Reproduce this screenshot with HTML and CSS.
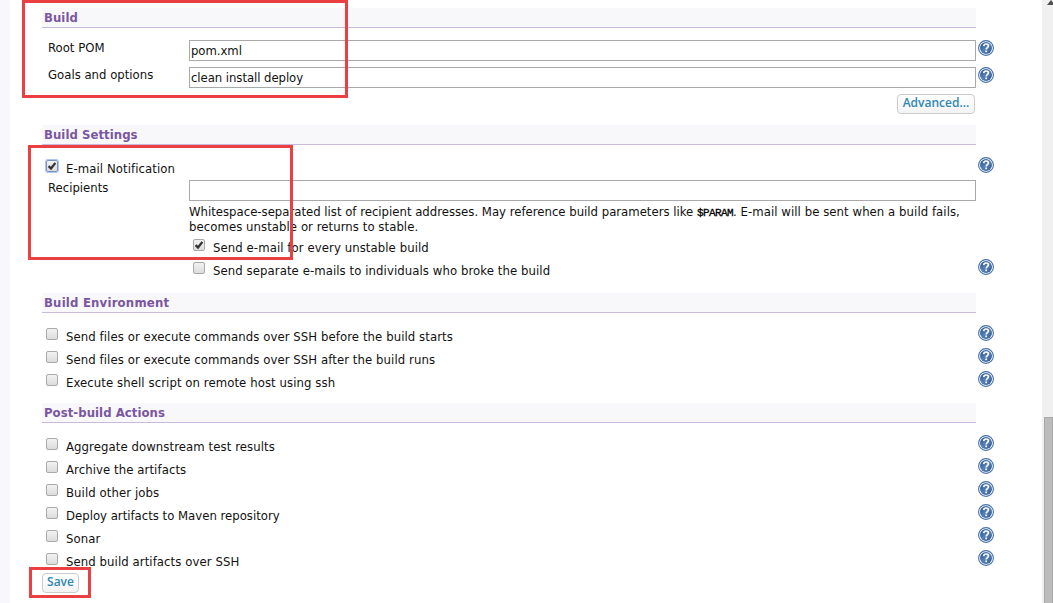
FILE: index.html
```
<!DOCTYPE html>
<html lang="en">
<head>
  <meta charset="UTF-8">
  <title>Job configuration</title>
  <link rel="stylesheet" href="styles.css">
</head>
<body>
  <svg class="defs" width="0" height="0">
    <defs>
      <linearGradient id="blue" x1="0" y1="0" x2="1" y2="1">
        <stop offset="0" stop-color="#24508c"/>
        <stop offset="0.5" stop-color="#5580b6"/>
        <stop offset="1" stop-color="#2d5792"/>
      </linearGradient>
      <symbol id="help" viewBox="0 0 16 16">
        <circle cx="8" cy="8" r="7.4" fill="#fff" stroke="#4470a8" stroke-width="1.1"/>
        <circle cx="8" cy="8" r="6" fill="url(#blue)"/>
        <path d="M5.7 6.1C5.8 4.6 6.8 4 8 4c1.4 0 2.4.8 2.4 2 0 1.500-2.200 1.700-2.200 3.400" fill="none" stroke="#fff" stroke-width="1.7"/>
        <rect x="7.3" y="10.5" width="1.800" height="1.700" fill="#fff"/>
      </symbol>
      <symbol id="tick" viewBox="0 0 12 12">
        <path d="M2.6 6.2L5 8.500L9.4 2.900" fill="none" stroke="#333" stroke-width="2.300"/>
      </symbol>
    </defs>
  </svg>
  <div class="side"></div>
  <main class="config">
    <section class="build">
      <h2>Build</h2>
      <div class="field">
        <label class="name">Root POM</label>
        <div class="input">pom.xml</div>
        <svg class="help"><use href="#help"/></svg>
      </div>
      <div class="field">
        <label class="name">Goals and options</label>
        <div class="input">clean install deploy</div>
        <svg class="help"><use href="#help"/></svg>
      </div>
      <div class="advanced"><button>Advanced...</button></div>
    </section>

    <section class="settings">
      <h2>Build Settings</h2>
      <div class="option">
        <span class="box focus"><svg><use href="#tick"/></svg></span>
        <label>E-mail Notification</label>
        <svg class="help"><use href="#help"/></svg>
      </div>
      <div class="field mail">
        <label class="name">Recipients</label>
        <div class="input"></div>
      </div>
      <p class="description">Whitespace-separated list of recipient addresses. May reference build parameters like <code>$PARAM</code><span class="wide">. E-mail will be sent when a build fails,<br>becomes unstable or returns to stable.</span></p>
      <div class="option nested">
        <span class="box"><svg><use href="#tick"/></svg></span>
        <label>Send e-mail for every unstable build</label>
      </div>
      <div class="option nested">
        <span class="box"></span>
        <label>Send separate e-mails to individuals who broke the build</label>
        <svg class="help"><use href="#help"/></svg>
      </div>
    </section>

    <section class="environment">
      <h2>Build Environment</h2>
      <div class="option">
        <span class="box"></span>
        <label>Send files or execute commands over SSH before the build starts</label>
        <svg class="help"><use href="#help"/></svg>
      </div>
      <div class="option">
        <span class="box"></span>
        <label>Send files or execute commands over SSH after the build runs</label>
        <svg class="help"><use href="#help"/></svg>
      </div>
      <div class="option">
        <span class="box"></span>
        <label>Execute shell script on remote host using ssh</label>
        <svg class="help"><use href="#help"/></svg>
      </div>
    </section>

    <section class="actions">
      <h2>Post-build Actions</h2>
      <div class="option">
        <span class="box"></span>
        <label>Aggregate downstream test results</label>
        <svg class="help"><use href="#help"/></svg>
      </div>
      <div class="option">
        <span class="box"></span>
        <label>Archive the artifacts</label>
        <svg class="help"><use href="#help"/></svg>
      </div>
      <div class="option">
        <span class="box"></span>
        <label>Build other jobs</label>
        <svg class="help"><use href="#help"/></svg>
      </div>
      <div class="option">
        <span class="box"></span>
        <label class="tight">Deploy artifacts to Maven repository</label>
        <svg class="help"><use href="#help"/></svg>
      </div>
      <div class="option">
        <span class="box"></span>
        <label>Sonar</label>
        <svg class="help"><use href="#help"/></svg>
      </div>
      <div class="option">
        <span class="box"></span>
        <label>Send build artifacts over SSH</label>
        <svg class="help"><use href="#help"/></svg>
      </div>
    </section>
    <button class="save">Save</button>
  </main>
  <div class="scrollbar">
    <div class="arrow"></div>
    <div class="thumb"></div>
  </div>

  <div class="mark mark-build"></div>
  <div class="mark mark-mail"></div>
  <div class="mark mark-save"></div>
</body>
</html>
```
FILE: styles.css
```
* {
  margin: 0;
  padding: 0;
  box-sizing: border-box;
}
body {
  display: flex;
  height: 603px;
  overflow: hidden;
  background: #fff;
  color: #111;
  font: 13px/15px "DejaVu Sans Condensed", "DejaVu Sans", sans-serif;
  font-stretch: condensed;
}
.defs {
  position: absolute;
}
.side {
  width: 10px;
  background: #f8f7fc;
}
.config {
  flex: 1;
  padding: 8px 48px 0 32px;
}
section {
  height: 110px;
}
.build {
  height: 117px;
}
.settings {
  height: 168px;
}
.actions {
  height: 170px;
}
h2 {
  width: 934px;
  height: 20px;
  margin-bottom: 12px;
  padding-left: 2px;
  border-bottom: 1px solid #c9b9dc;
  background: #f8f8fb;
  color: #7a56a0;
  font-size: 13px;
  line-height: 19px;
  letter-spacing: 0.05px;
}
.environment h2 {
  letter-spacing: 0.2px;
}
.field {
  display: grid;
  grid-template-columns: 147px 787px 18px;
  height: 27px;
}
.field.mail {
  height: 24px;
}
.name {
  padding-left: 6px;
}
.input {
  height: 21px;
  padding-left: 1px;
  border: 1px solid #a9a9a9;
  line-height: 19px;
  letter-spacing: -0.06px;
  white-space: nowrap;
}
.help {
  width: 16px;
  height: 16px;
  margin-left: 2px;
}
.option .help {
  margin-left: auto;
}
.advanced {
  display: flex;
  justify-content: flex-end;
  width: 933px;
}
button {
  display: block;
  width: 78px;
  height: 20px;
  padding-bottom: 2px;
  border: 1px solid #ccc;
  border-radius: 4px;
  background: linear-gradient(#fff, #f3f3f3);
  color: #3088b4;
  font: 600 12px/16px "Open Sans", sans-serif;
}
.save {
  width: 37px;
}
.option {
  display: flex;
  width: 952px;
  height: 23px;
  padding-left: 4px;
}
.option label {
  margin: 4px 0 0 8px;
  letter-spacing: 0.08px;
  white-space: nowrap;
}
.option .tight {
  letter-spacing: 0;
}
.option.nested {
  padding-left: 151px;
}
.box {
  width: 12px;
  height: 12px;
  margin-top: 3px;
  border: 1px solid #aaa;
  border-radius: 2px;
  background: linear-gradient(#f2f2f2, #dcdcdc);
}
.box svg {
  display: block;
  width: 12px;
  height: 12px;
  margin: -1px;
}
.box.focus {
  border-color: #7d94b8;
  box-shadow: 0 0 0 1px #a9c5f2;
}
.description {
  height: 32px;
  padding-left: 147px;
  white-space: nowrap;
}
.description code {
  color: #000;
  font: 11px/12px "Liberation Mono", monospace;
  letter-spacing: -0.6px;
  -webkit-text-stroke: 0.3px #000;
}
.wide {
  letter-spacing: 0.06px;
}
.scrollbar {
  width: 11px;
  background: #f0f0f0;
  overflow: hidden;
}
.arrow {
  width: 0;
  margin-left: 5px;
  border: 4px solid transparent;
  border-top: 0;
  border-bottom: 5px solid #505050;
}
.thumb {
  height: 200px;
  margin: 412px 0 0 2px;
  border: 1px solid #a8a8a8;
  background: #bcbcbc;
}
/* red annotation frames over the form */
.mark {
  position: absolute;
  border: 3px solid #ec3f41;
}
.mark-build {
  left: 22px;
  top: 0;
  width: 326px;
  height: 98px;
}
.mark-mail {
  left: 28px;
  top: 145px;
  width: 265px;
  height: 115px;
}
.mark-save {
  left: 29px;
  top: 567px;
  width: 62px;
  height: 31px;
}
```
